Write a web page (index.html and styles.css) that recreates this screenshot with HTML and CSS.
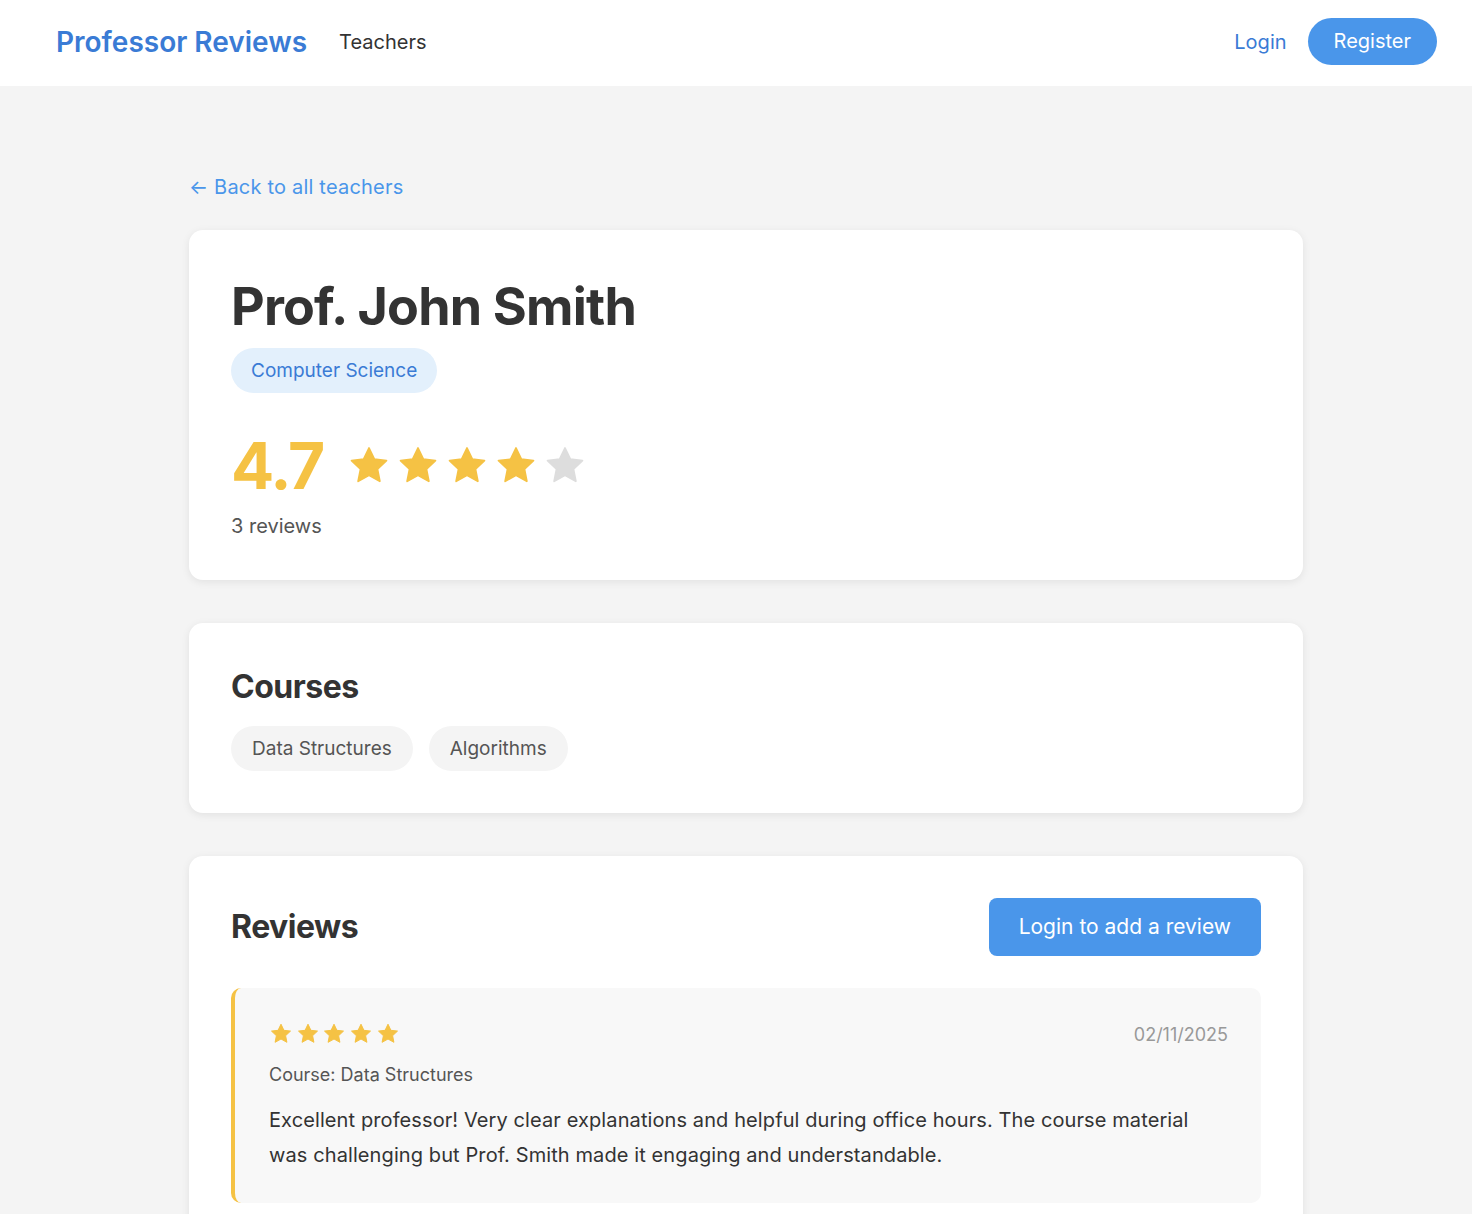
FILE: index.html
```html
<!DOCTYPE html>
<html lang="en">
<head>
    <meta charset="UTF-8">
    <meta name="viewport" content="width=device-width, initial-scale=1.0">
    <title>Prof. John Smith - Professor Reviews</title>
    <link rel="stylesheet" href="styles.css">
</head>
<body>
    <header class="navbar">
        <div class="nav-left">
            <a href="#" class="logo">Professor Reviews</a>
            <a href="#" class="nav-link">Teachers</a>
        </div>
        <div class="nav-right">
            <a href="#" class="login-link">Login</a>
            <a href="#" class="register-btn">Register</a>
        </div>
    </header>

    <main class="container">
        <a href="#" class="back-link">&larr; Back to all teachers</a>

        <section class="card teacher-card">
            <h1>Prof. John Smith</h1>
            <span class="dept-badge">Computer Science</span>
            <div class="rating-row">
                <span class="rating-value">4.7</span>
                <div class="stars stars-lg">
                    <svg viewBox="0 0 24 24"><path class="on" d="M12 2.2l2.9 6.1 6.6.8-4.9 4.6 1.3 6.6L12 17l-5.9 3.3 1.3-6.6-4.9-4.6 6.6-.8z"/></svg>
                    <svg viewBox="0 0 24 24"><path class="on" d="M12 2.2l2.9 6.1 6.6.8-4.9 4.6 1.3 6.6L12 17l-5.9 3.3 1.3-6.6-4.9-4.6 6.6-.8z"/></svg>
                    <svg viewBox="0 0 24 24"><path class="on" d="M12 2.2l2.9 6.1 6.6.8-4.9 4.6 1.3 6.6L12 17l-5.9 3.3 1.3-6.6-4.9-4.6 6.6-.8z"/></svg>
                    <svg viewBox="0 0 24 24"><path class="on" d="M12 2.2l2.9 6.1 6.6.8-4.9 4.6 1.3 6.6L12 17l-5.9 3.3 1.3-6.6-4.9-4.6 6.6-.8z"/></svg>
                    <svg viewBox="0 0 24 24"><path class="off" d="M12 2.2l2.9 6.1 6.6.8-4.9 4.6 1.3 6.6L12 17l-5.9 3.3 1.3-6.6-4.9-4.6 6.6-.8z"/></svg>
                </div>
            </div>
            <p class="review-count">3 reviews</p>
        </section>

        <section class="card">
            <h2 class="courses-title">Courses</h2>
            <div class="course-list">
                <span class="course-chip">Data Structures</span>
                <span class="course-chip">Algorithms</span>
            </div>
        </section>

        <section class="card">
            <div class="reviews-header">
                <h2>Reviews</h2>
                <a href="#" class="add-review-btn">Login to add a review</a>
            </div>

            <div class="review">
                <div class="review-top">
                    <div class="stars stars-sm">
                        <svg viewBox="0 0 24 24"><path class="on" d="M12 2.2l2.9 6.1 6.6.8-4.9 4.6 1.3 6.6L12 17l-5.9 3.3 1.3-6.6-4.9-4.6 6.6-.8z"/></svg>
                        <svg viewBox="0 0 24 24"><path class="on" d="M12 2.2l2.9 6.1 6.6.8-4.9 4.6 1.3 6.6L12 17l-5.9 3.3 1.3-6.6-4.9-4.6 6.6-.8z"/></svg>
                        <svg viewBox="0 0 24 24"><path class="on" d="M12 2.2l2.9 6.1 6.6.8-4.9 4.6 1.3 6.6L12 17l-5.9 3.3 1.3-6.6-4.9-4.6 6.6-.8z"/></svg>
                        <svg viewBox="0 0 24 24"><path class="on" d="M12 2.2l2.9 6.1 6.6.8-4.9 4.6 1.3 6.6L12 17l-5.9 3.3 1.3-6.6-4.9-4.6 6.6-.8z"/></svg>
                        <svg viewBox="0 0 24 24"><path class="on" d="M12 2.2l2.9 6.1 6.6.8-4.9 4.6 1.3 6.6L12 17l-5.9 3.3 1.3-6.6-4.9-4.6 6.6-.8z"/></svg>
                    </div>
                    <span class="review-date">02/11/2025</span>
                </div>
                <p class="review-course">Course: Data Structures</p>
                <p class="review-text">Excellent professor! Very clear explanations and helpful during office hours. The course material was challenging but Prof. Smith made it engaging and understandable.</p>
            </div>
        </section>
    </main>
</body>
</html>
```

FILE: styles.css
```css
body {
    font-family: 'Inter', 'Roboto', sans-serif;
    margin: 0;
    padding: 0;
    background: #f4f4f4;
    color: #333;
    min-height: 100vh;
}

a {
    text-decoration: none;
}

.navbar {
    display: flex;
    justify-content: space-between;
    align-items: center;
    height: 83px;
    padding: 0 35px 3px 56px;
    background: white;
}

.nav-left,
.nav-right {
    display: flex;
    align-items: center;
}

.logo {
    color: #3a7bd5;
    font-size: 28px;
    font-weight: 600;
    margin-right: 32px;
}

.nav-link {
    color: #333;
    font-size: 20px;
}

.login-link {
    color: #3a7bd5;
    font-size: 20px;
    margin-right: 21px;
}

.register-btn {
    background: #4a96ea;
    color: white;
    font-size: 20px;
    height: 47px;
    line-height: 47px;
    padding: 0 26px;
    border-radius: 24px;
}

.container {
    max-width: 1114px;
    margin: 0 auto;
    padding: 89px 0 40px 20px;
}

.back-link {
    display: inline-block;
    color: #4a96ea;
    font-size: 20px;
    letter-spacing: 0.2px;
    margin-bottom: 31px;
}

.card {
    background: white;
    border-radius: 14px;
    padding: 42px;
    margin-bottom: 43px;
    box-shadow: 0 2px 8px rgba(0,0,0,0.08);
}

.teacher-card {
    padding-top: 46px;
}

h1 {
    font-size: 52px;
    font-weight: 700;
    letter-spacing: -0.8px;
    margin: 0 0 10px;
    line-height: 62px;
}

.dept-badge {
    display: inline-block;
    background: #e3f0fc;
    color: #3a7bd5;
    font-size: 19px;
    height: 45px;
    line-height: 45px;
    padding: 0 20px;
    border-radius: 23px;
}

.rating-row {
    display: flex;
    align-items: center;
    margin-top: 41px;
}

.rating-value {
    color: #f5c244;
    font-size: 64px;
    font-weight: 700;
    letter-spacing: -2px;
    line-height: 64px;
    margin-right: 24px;
}

.stars {
    display: flex;
}

.stars svg {
    display: block;
}

.stars .on {
    fill: #f5c244;
    stroke: #f5c244;
    stroke-linejoin: round;
    stroke-width: 1;
}

.stars .off {
    fill: #dddddd;
    stroke: #dddddd;
    stroke-linejoin: round;
    stroke-width: 1;
}

.stars-lg svg {
    width: 44px;
    height: 44px;
    margin-right: 5px;
}

.stars-sm svg {
    width: 24px;
    height: 24px;
    margin-right: 2.7px;
}

.review-count {
    color: #555;
    font-size: 20px;
    margin: 16px 0 0;
}

h2 {
    font-size: 32px;
    font-weight: 700;
    letter-spacing: -0.5px;
    margin: 0;
    line-height: 40px;
}

.courses-title {
    margin-top: 2px;
}

.course-list {
    display: flex;
    gap: 16px;
    margin-top: 19px;
}

.course-chip {
    background: #f4f4f4;
    color: #555;
    font-size: 19px;
    height: 45px;
    line-height: 45px;
    padding: 0 21px;
    border-radius: 23px;
}

.reviews-header {
    display: flex;
    justify-content: space-between;
    align-items: center;
    margin-bottom: 32px;
}

.add-review-btn {
    background: #4a96ea;
    color: white;
    font-size: 21px;
    height: 58px;
    line-height: 58px;
    padding: 0 30px;
    border-radius: 8px;
}

.review {
    background: #f8f8f8;
    border-left: 4px solid #f5c244;
    border-radius: 10px;
    padding: 34px 33px 30px 34px;
}

.review-top {
    display: flex;
    justify-content: space-between;
    align-items: center;
}

.review-date {
    color: #999;
    font-size: 18px;
}

.review-course {
    color: #555;
    font-size: 18px;
    margin: 18px 0 0;
}

.review-text {
    font-size: 20px;
    line-height: 35px;
    letter-spacing: 0.1px;
    margin: 18px 0 0;
    color: #333;
}
```
